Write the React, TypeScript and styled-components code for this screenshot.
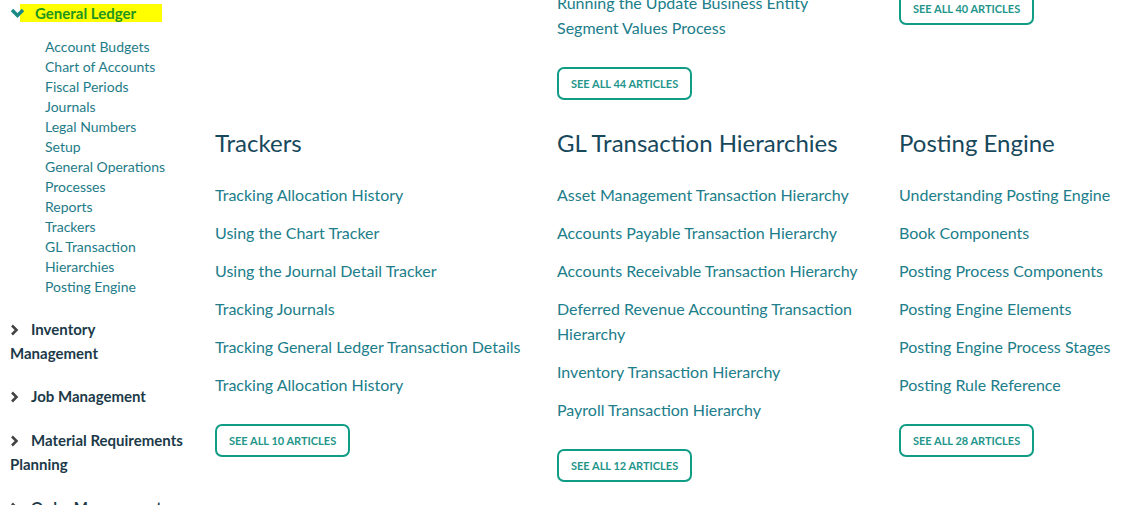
import React from "react";
import styled, { createGlobalStyle } from "styled-components";

const Global = createGlobalStyle`
  html, body { margin: 0; padding: 0; background: #fff; }
  body { font-family: "Lato", "Noto Sans", sans-serif; overflow: hidden; }
  * { box-sizing: border-box; }
`;

const Page = styled.div`
  display: flex;
  width: 1130px;
  height: 505px;
  overflow: hidden;
`;

const Sidebar = styled.nav`
  width: 215px;
  flex: none;
  padding: 4px 0 0 10px;
`;

const ActiveHead = styled.div`
  display: flex;
  align-items: center;
  height: 18px;
`;

const Chevron = styled.svg<{ $color: string }>`
  flex: none;
  display: block;
  position: relative;
  z-index: 1;
  color: ${(p) => p.$color};
`;

const Highlight = styled.span`
  background: #ffff00;
  color: #22951f;
  font-size: 15px;
  font-weight: 700;
  line-height: 18px;
  padding: 0 26px 0 15px;
  margin-left: -5px;
`;

const SubList = styled.ul`
  list-style: none;
  margin: 15px 0 1.5px 35px;
  padding: 0;
`;

const SubItem = styled.li`
  font-size: 14px;
  line-height: 20px;
  color: #1e7b88;
`;

const Group = styled.div`
  margin-top: 19.5px;
  font-size: 15px;
  font-weight: 700;
  line-height: 24px;
  color: #1c3a48;
`;

const GroupChevron = styled.span`
  display: inline-block;
  width: 21px;
  vertical-align: -1px;
`;

const Main = styled.main`
  flex: 1;
  overflow: hidden;
`;

const Grid = styled.div`
  display: grid;
  grid-template-columns: 342px 342px 231px;
  margin-top: -10px;
  row-gap: 28px;
`;

const Column = styled.section`
  display: flex;
  flex-direction: column;
  align-items: flex-start;
`;

const Heading = styled.h2`
  margin: 0 0 24px;
  font-size: 24px;
  font-weight: 400;
  line-height: 30px;
  color: #17485c;
`;

const Links = styled.ul`
  list-style: none;
  margin: 0;
  padding: 0;
  display: flex;
  flex-direction: column;
  gap: 13px;
`;

const LinkItem = styled.li`
  font-size: 16px;
  line-height: 25px;
  color: #207d8a;
  max-width: 310px;
`;

const SeeAll = styled.button<{ $flush?: boolean }>`
  margin-top: ${(p) => (p.$flush ? "2px" : "27px")};
  height: 33px;
  padding: 0 12px;
  border: 2px solid #119c86;
  border-radius: 7px;
  background: #fff;
  color: #23958a;
  font-family: inherit;
  font-size: 11px;
  font-weight: 700;
  text-transform: uppercase;
`;

const DownIcon = () => (
  <Chevron $color="#1b8a87" width="15" height="10" viewBox="0 0 15 10">
    <path d="M2 2 L7.5 7.5 L13 2" fill="none" stroke="currentColor" strokeWidth="3.4" />
  </Chevron>
);

const RightIcon = () => (
  <Chevron $color="#444" width="9" height="12" viewBox="0 0 9 12">
    <path d="M2 1.5 L6.5 6 L2 10.5" fill="none" stroke="currentColor" strokeWidth="2.6" />
  </Chevron>
);

type Sec = { title?: string; links: string[]; count: number };

const top: Sec[] = [
  { links: [], count: 0 },
  { links: ["Running the Update Business Entity Segment Values Process"], count: 44 },
  { links: [], count: 40 },
];

const sections: Sec[] = [
  {
    title: "Trackers",
    links: [
      "Tracking Allocation History",
      "Using the Chart Tracker",
      "Using the Journal Detail Tracker",
      "Tracking Journals",
      "Tracking General Ledger Transaction Details",
      "Tracking Allocation History",
    ],
    count: 10,
  },
  {
    title: "GL Transaction Hierarchies",
    links: [
      "Asset Management Transaction Hierarchy",
      "Accounts Payable Transaction Hierarchy",
      "Accounts Receivable Transaction Hierarchy",
      "Deferred Revenue Accounting Transaction Hierarchy",
      "Inventory Transaction Hierarchy",
      "Payroll Transaction Hierarchy",
    ],
    count: 12,
  },
  {
    title: "Posting Engine",
    links: [
      "Understanding Posting Engine",
      "Book Components",
      "Posting Process Components",
      "Posting Engine Elements",
      "Posting Engine Process Stages",
      "Posting Rule Reference",
    ],
    count: 28,
  },
];

const subs = [
  "Account Budgets",
  "Chart of Accounts",
  "Fiscal Periods",
  "Journals",
  "Legal Numbers",
  "Setup",
  "General Operations",
  "Processes",
  "Reports",
  "Trackers",
  "GL Transaction",
  "Hierarchies",
  "Posting Engine",
];

const groups: [string, string?][] = [
  ["Inventory", "Management"],
  ["Job Management"],
  ["Material Requirements", "Planning"],
  ["Order Management"],
];

export default function App() {
  return (
    <>
      <Global />
      <Page>
        <Sidebar>
          <ActiveHead>
            <DownIcon />
            <Highlight>General Ledger</Highlight>
          </ActiveHead>
          <SubList>
            {subs.map((s, i) => (
              <SubItem key={i}>{s}</SubItem>
            ))}
          </SubList>
          {groups.map(([a, b], i) => (
            <Group key={i}>
              <GroupChevron>
                <RightIcon />
              </GroupChevron>
              {a}
              {b && (
                <>
                  <br />
                  {b}
                </>
              )}
            </Group>
          ))}
        </Sidebar>
        <Main>
          <Grid>
            {top.map((s, i) => (
              <Column key={"t" + i}>
                {s.links.length > 0 && (
                  <Links>
                    {s.links.map((l, j) => (
                      <LinkItem key={j}>{l}</LinkItem>
                    ))}
                  </Links>
                )}
                {s.count > 0 && (
                  <SeeAll $flush={s.links.length === 0}>See all {s.count} articles</SeeAll>
                )}
              </Column>
            ))}
            {sections.map((s, i) => (
              <Column key={i}>
                <Heading>{s.title}</Heading>
                <Links>
                  {s.links.map((l, j) => (
                    <LinkItem key={j}>{l}</LinkItem>
                  ))}
                </Links>
                <SeeAll>See all {s.count} articles</SeeAll>
              </Column>
            ))}
          </Grid>
        </Main>
      </Page>
    </>
  );
}
